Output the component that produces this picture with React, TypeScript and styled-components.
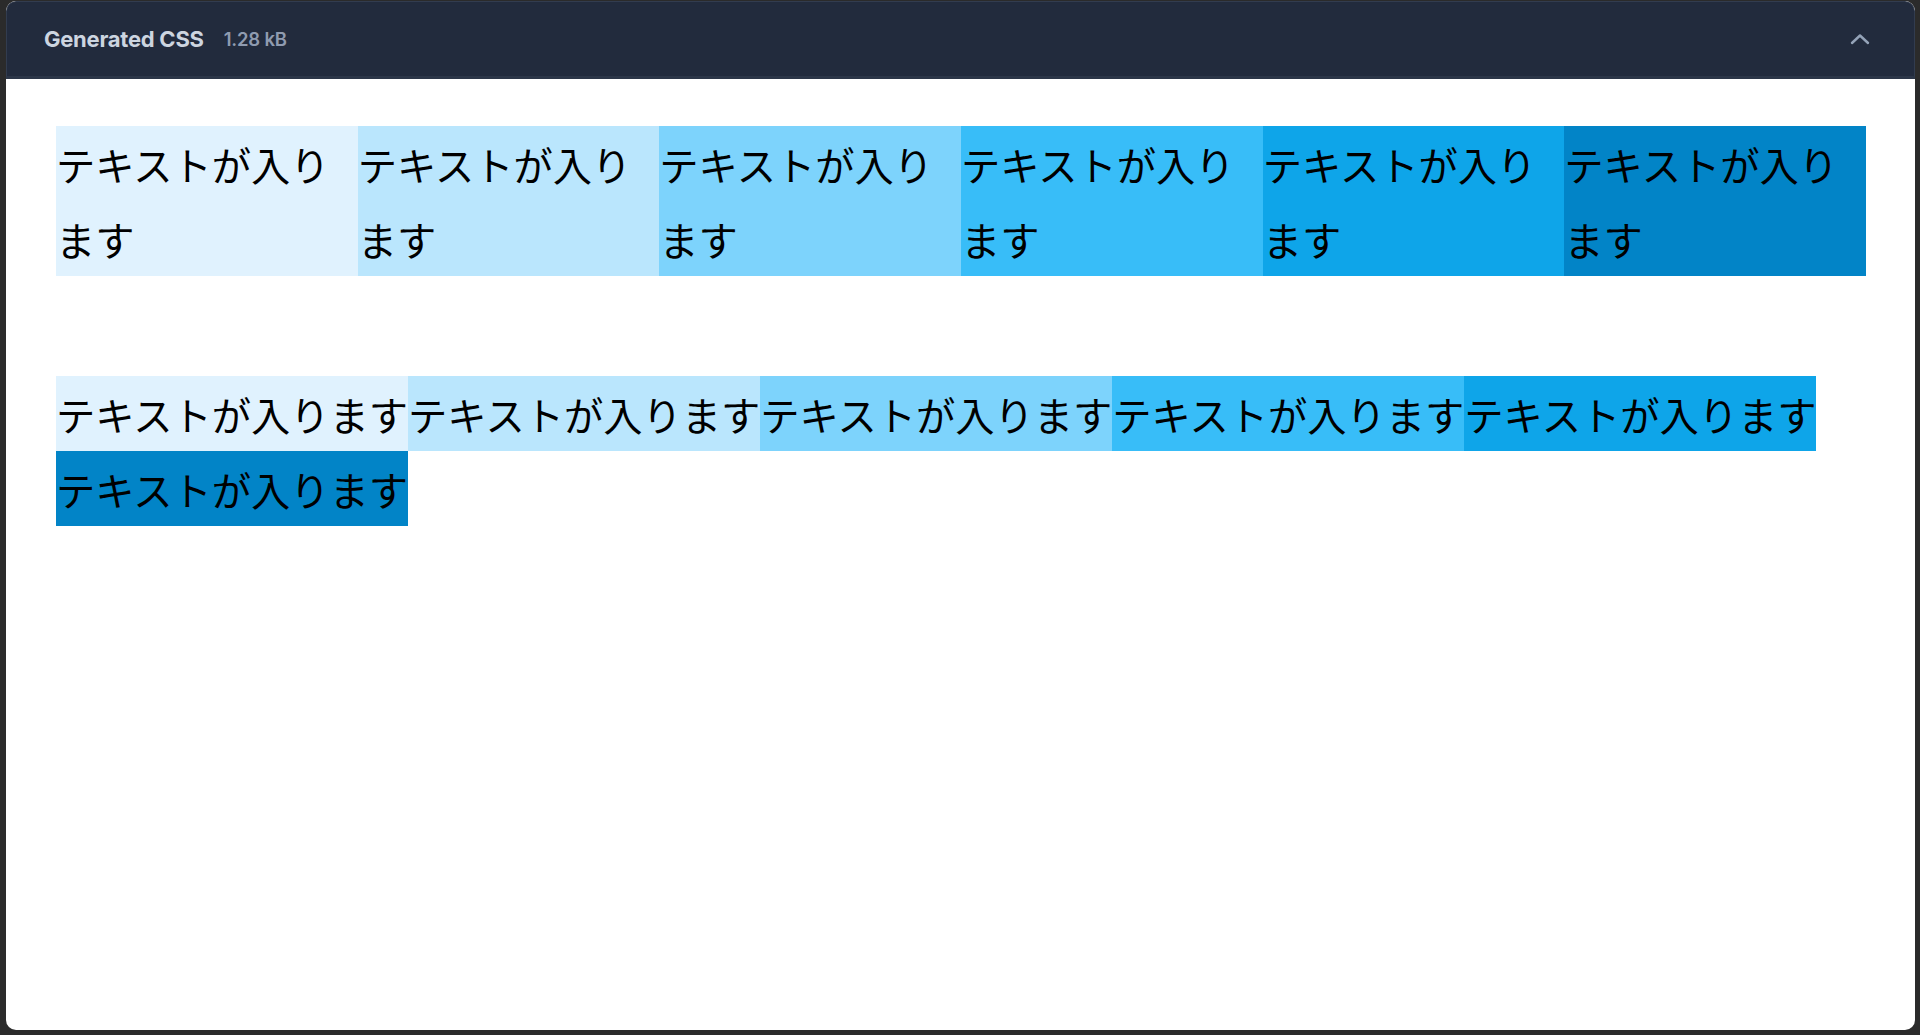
import styled, { createGlobalStyle } from "styled-components";

const GlobalStyle = createGlobalStyle`
  html, body {
    margin: 0;
    padding: 0;
    background: #2b2b2b;
  }
  body {
    font-family: Inter, "Noto Sans", sans-serif;
  }
`;

const Frame = styled.div`
  box-sizing: border-box;
  height: 1035px;
  padding: 1px 5px 5px 6px;
  background: #2b2b2b;
`;

const Card = styled.section`
  box-sizing: border-box;
  height: 100%;
  display: flex;
  flex-direction: column;
  background: #ffffff;
  border-radius: 10px;
  overflow: hidden;
`;

const Header = styled.header`
  box-sizing: border-box;
  height: 78px;
  flex: none;
  display: flex;
  align-items: center;
  padding: 0 44px 0 37px;
  background: #222b3d;
  border: 1px solid #323c4f;
  border-bottom: 3px solid #2c3648;
  border-radius: 10px 10px 0 0;
`;

const Title = styled.h2`
  margin: 0;
  font-size: 22px;
  font-weight: 700;
  color: #cdd5e0;
  letter-spacing: -0.25px;
`;

const Size = styled.span`
  margin-left: 20px;
  font-size: 18.5px;
  font-weight: 600;
  color: #8f9bb0;
  letter-spacing: -0.2px;
`;

const Toggle = styled.button`
  margin-left: auto;
  display: flex;
  align-items: center;
  justify-content: center;
  padding: 0;
  border: 0;
  background: none;
  color: #94a3b8;
  cursor: pointer;
`;

const Body = styled.div`
  padding: 47px 49px 0 50px;
  font-family: "Noto Sans CJK JP", "Noto Sans", sans-serif;
  font-size: 39.25px;
  line-height: 75px;
  color: #000;
`;

const Grid = styled.div`
  display: grid;
  grid-template-columns: repeat(6, 1fr);
`;

const Cell = styled.div<{ $bg: string }>`
  background: ${(p) => p.$bg};
`;

const Flow = styled.div`
  display: flex;
  flex-wrap: wrap;
  margin-top: 100px;
`;

const Chip = styled.span<{ $bg: string }>`
  background: ${(p) => p.$bg};
  white-space: nowrap;
`;

const shades = ["#e0f2fe", "#bae6fd", "#7dd3fc", "#38bdf8", "#0ea5e9", "#0284c7"];
const label = "テキストが入ります";

const App = () => {
  return (
    <>
      <GlobalStyle />
      <Frame>
        <Card>
          <Header>
            <Title>Generated CSS</Title>
            <Size>1.28 kB</Size>
            <Toggle aria-label="collapse">
              <svg width="20" height="12" viewBox="0 0 20 12" fill="none">
                <path
                  d="M2 10 L10 2.5 L18 10"
                  stroke="currentColor"
                  strokeWidth="2.4"
                  strokeLinecap="round"
                  strokeLinejoin="round"
                />
              </svg>
            </Toggle>
          </Header>
          <Body>
            <Grid>
              {shades.map((c) => (
                <Cell key={c} $bg={c}>
                  {label}
                </Cell>
              ))}
            </Grid>
            <Flow>
              {shades.map((c) => (
                <Chip key={c} $bg={c}>
                  {label}
                </Chip>
              ))}
            </Flow>
          </Body>
        </Card>
      </Frame>
    </>
  );
};

export default App;
